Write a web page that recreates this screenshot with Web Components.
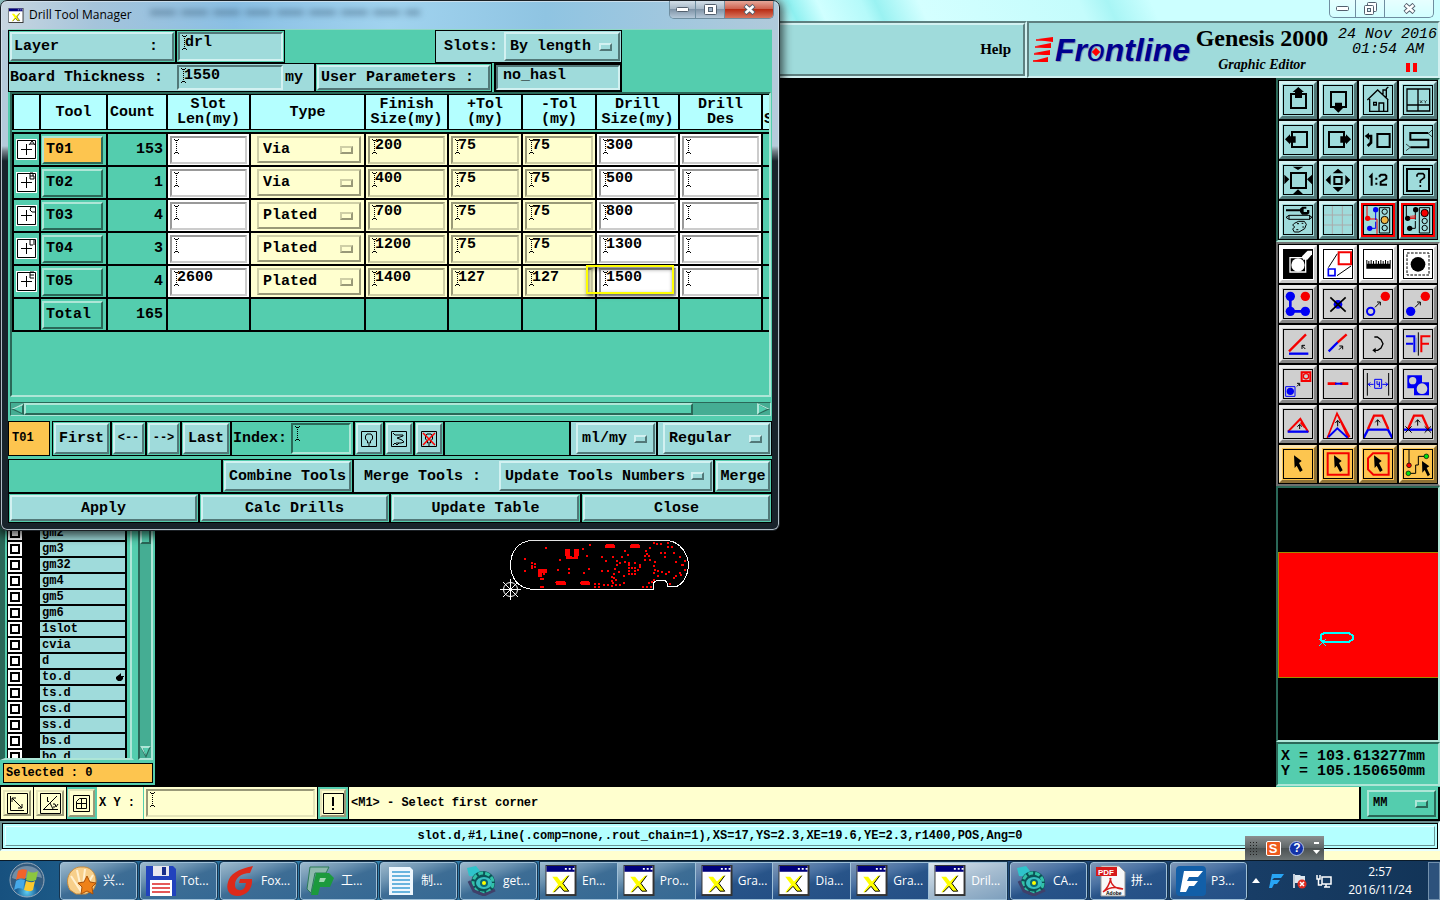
<!DOCTYPE html>
<html lang="en">
<head>
<meta charset="utf-8">
<title>Drill Tool Manager</title>
<style>
html,body{margin:0;height:100%}
body{background:#ffffcf;overflow:hidden;font:bold 15px/15px "Liberation Mono","Noto Sans CJK SC",monospace;color:#000}
genesis-desktop{min-height:100vh}
</style>
</head>
<body>
<genesis-desktop></genesis-desktop>
<script>
const BASE = `
*{box-sizing:border-box}
button,input,select{font:inherit;color:inherit;margin:0;border-radius:0;outline:0}
svg{display:block}
`;
const define = (name, css, html) => {
  customElements.define(name, class extends HTMLElement {
    connectedCallback() {
      if (this.shadowRoot) return;
      const root = this.attachShadow({ mode: 'open' });
      root.innerHTML = `<style>${BASE}${css}</style>` + (typeof html === 'function' ? html(this) : html);
    }
  });
};
const svg = (w, h, box, body) => `<svg width="${w}" height="${h}" viewBox="${box}" aria-hidden="true">${body}</svg>`;

/* ---------- basic controls ---------- */
define('motif-button', `
:host{display:block;min-width:0}
button{display:flex;align-items:center;justify-content:var(--align,center);width:100%;height:100%;padding:0 var(--pad,0px);white-space:pre;
 background:var(--face,#9fdbdb);border:2px solid;border-color:var(--lo,#d2f1f1) var(--hi,#527878) var(--hi,#527878) var(--lo,#d2f1f1)}
`, '<button type="button"><slot></slot></button>');

const IBEAM = `url("data:image/svg+xml,%3Csvg xmlns='http://www.w3.org/2000/svg' width='5' height='15' shape-rendering='crispEdges'%3E%3Cpath d='M2.500 1V15' stroke='%23000' stroke-dasharray='1 1'/%3E%3Cpath d='M0 0h1v1H0zM1 1h1v1H1zM3 1h1v1H3zM4 0h1v1H4zM0 14h1v1H0zM1 13h1v1H1zM3 13h1v1H3zM4 14h1v1H4z'/%3E%3C/svg%3E")`;
define('motif-field', `
:host{display:block;min-width:0}
input{display:block;width:100%;height:100%;padding:0 0 var(--drop,9px) var(--text,5px);border:2px solid;
 border-color:var(--hi,#527878) var(--lo,#d2f1f1) var(--lo,#d2f1f1) var(--hi,#527878);
 background:var(--face,#9fdbdb) ${IBEAM} 2px 1px no-repeat}
:host([plain]) input{background-image:none}
`, el => `<input type="text" aria-label="${el.getAttribute('label')}" value="${el.getAttribute('value') || ''}">`);

define('motif-option', `
:host{display:grid;min-width:0}
select{grid-area:1/1;appearance:none;width:100%;height:100%;padding:0 24px 0 4px;background:var(--face,#9fdbdb);border:2px solid;
 border-color:var(--lo,#d2f1f1) var(--hi,#527878) var(--hi,#527878) var(--lo,#d2f1f1)}
i{grid-area:1/1;place-self:center end;margin-right:8px;width:13px;height:8px;border:2px solid;pointer-events:none;
 border-color:var(--lo,#d2f1f1) var(--hi,#527878) var(--hi,#527878) var(--lo,#d2f1f1)}
`, el => `<select aria-label="${el.getAttribute('label')}"><option>${el.getAttribute('value')}</option></select><i></i>`);

/* ---------- header ---------- */
define('window-buttons', `
:host{display:flex;height:18px;border:1px solid #6f8ea0;border-top:0;border-radius:0 0 5px 5px;overflow:hidden}
button{border:0;border-right:1px solid #6f8ea0;padding:0;width:29px;display:grid;place-items:center;background:linear-gradient(#ffffff88,#ffffff22)}
button:nth-child(2){width:26px}
button:last-child{width:48px;border-right:0}
:host([active]) button{background:linear-gradient(#d3dfe8,#a3b5c4 50%,#8195a8 50%,#b5c8d8)}
:host([active]) button:last-child{background:linear-gradient(#e6a799,#cd5c48 50%,#b92d15 50%,#d8765f)}
`, el => `<button aria-label="Minimize">${svg(13,5,'0 0 13 5','<rect x=".5" y=".5" width="12" height="4" rx="1" fill="#fff" stroke="#53606e"/>')}</button>
<button aria-label="Restore">${el.hasAttribute('active')
  ? svg(13,11,'0 0 13 11','<rect x=".5" y=".5" width="12" height="10" rx="1" fill="#fff" stroke="#53606e"/><rect x="4.500" y="3.500" width="4" height="4" fill="#9eb4c8" stroke="#53606e"/>')
  : svg(13,13,'0 0 13 13','<rect x="3.500" y=".5" width="9" height="9" rx="1" fill="#fff" stroke="#53606e"/><rect x=".5" y="3.500" width="9" height="9" rx="1" fill="#fff" stroke="#53606e"/><rect x="3.500" y="6.500" width="3" height="3" fill="#d8f4f8" stroke="#53606e"/>')}</button>
<button aria-label="Close">${svg(13,11,'0 0 13 11','<path d="M2 1.500 11 9.500M11 1.500 2 9.500" stroke="#53606e" stroke-width="4.500"/><path d="M2.500 2 10.500 9M10.500 2 2.500 9" stroke="#fff" stroke-width="2.500"/>')}</button>`);

define('app-header', `
:host{display:block}
.title{height:21px;display:flex;justify-content:flex-end;padding-right:6px;background:linear-gradient(65deg,#b9fbfb 0 54%,#8ef0f0 55%,#d0ffff 57%,#b5fafa 60%,#9af2f2 61%,#d4ffff 64%,#c4fcfc 75%,#a8f5f5 77%,#ccffff 80%)}
.bar{display:flex;height:57px;background:#9fdbdb}
.menu,.brand{border:2px solid;border-color:#5e8080 #d2f1f1 #d2f1f1 #5e8080}
.menu{flex:1}
.menu nav{height:100%;display:flex;align-items:center;justify-content:flex-end;padding-right:12px;border:2px solid;border-color:#d2f1f1 #5e8080 #5e8080 #d2f1f1}
a{color:inherit;text-decoration:none;font:bold 15px/15px "Liberation Serif",serif}
.brand{width:413px;display:flex;padding-left:4px}
.logo{display:flex;align-items:center;color:#000090;font:italic bold 32px/40px "Liberation Sans",sans-serif;height:53px;gap:2px;width:160px}
.logo svg{flex:none}
.logo span{position:relative;white-space:pre;text-shadow:1px 1px #8e9ab0}
.logo span b{font-weight:400}
.logo i{position:absolute;left:38px;top:19px;width:6px;height:6px;background:red;transform:rotate(45deg)}
.names{width:138px;text-align:center;font-family:"Liberation Serif",serif;white-space:nowrap}
.names h1{margin:0;font:bold 24px/30px "Liberation Serif",serif}
.names p{margin:4px 0 0;font:italic bold 14px/16px "Liberation Serif",serif}
.time{flex:1;text-align:right;font:italic 15px/15px "Liberation Mono",monospace;padding-top:4px}
.time div{padding-right:1px}.time div+div{padding-right:14px}
.pause{display:flex;gap:3px;justify-content:flex-end;padding:6px 21px 0 0}
.pause b{width:4px;height:9px;background:red}
`, `<div class="title"><window-buttons></window-buttons></div>
<div class="bar"><div class="menu"><nav><a href="#help">Help</a></nav></div>
<div class="brand"><div class="logo">${svg(20,26,'0 0 20 26','<path d="M5 2 20 0V5L12 4ZM3 9 18 6V11L12 11ZM1 16 17 13V18L11 18ZM0 24 15 20V25L9 25Z" fill="red"/><path d="M3 3H16M2 10H14M1 17H13M0 24H12" stroke="red" stroke-width="1.500"/>')}<span>Fr<b>o</b>ntline<i></i></span></div>
<div class="names"><h1>Genesis 2000</h1><p>Graphic Editor</p></div>
<div class="time"><div>24 Nov 2016</div><div>01:54 AM</div><span class="pause"><b></b><b></b></span></div></div></div>`);

/* ---------- layer list ---------- */
define('layer-row', `
:host{display:flex;height:16px;padding:1px 0;background:#000;flex:none;font-size:12px;line-height:15px}
label{display:flex;flex:1;gap:18px}
input{appearance:none;flex:none;width:14px;height:14px;background:#fff;border:2px solid #fff;box-shadow:inset 0 0 0 2px #000}
span{flex:1;height:14px;padding-left:2px;background:#9fdbdb;margin-right:2px;display:flex;justify-content:space-between}
svg{margin:1px 1px 0 0}
`, el => `<label><input type="checkbox"><span>${el.textContent}${el.hasAttribute('mark') ? svg(8,12,'0 0 8 12','<path d="M0 6 4 3 5 2 5 5H8V6H7V8L5 10H2L0 8Z"/>') : ''}</span></label>`);

const LAYERS = ['gm2','gm3','gm32','gm4','gm5','gm6','1slot','cvia','d','to.d','ts.d','cs.d','ss.d','bs.d','bo.d'];
define('layer-panel', `
:host{display:flex;flex-direction:column;width:155px;background:#54cdae;padding-bottom:2px}
.body{flex:1;display:flex;min-height:0}
.frame{width:134px;border:2px solid #54cdae;border-left:5px solid #2a6858;border-bottom-color:#aee6d7;border-top:0;padding-left:2px;display:flex;flex-direction:column;justify-content:flex-end}
.list{height:233px;margin-right:3px;overflow:hidden;display:flex;flex-direction:column;padding-left:1px;background:#000;box-shadow:3px 0 #54cdae}
.inner{border-right:2px solid #aee6d7}
.scroll{width:15px;margin-left:4px;background:#45ad93;border:2px solid;border-color:#2a6858 #aee6d7 #aee6d7 #2a6858;display:flex;flex-direction:column;justify-content:space-between}
.thumb{height:464px;border:2px solid;background:#54cdae;border-color:#aee6d7 #2a6858 #2a6858 #aee6d7}
p{margin:3px 2px 0 3px;height:20px;border:1px solid #000;background:#fdc54f;font-size:12px;line-height:19px;padding-left:2px;white-space:pre}
`, `<div class="body"><div class="frame"><div class="inner"><div class="list">${LAYERS.map(n => `<layer-row ${n === 'to.d' ? 'mark' : ''}>${n}</layer-row>`).join('')}</div></div></div>
<div class="scroll"><div class="thumb"></div>${svg(11,12,'0 0 11 12','<path d="M0 0H11L6 12Z" fill="#2a6858"/><path d="M0 0H11L9 2H3L6 10Z" fill="#aee6d7"/><path d="M3 2H9L6 9Z" fill="#54cdae"/>')}</div></div><p>Selected : 0</p>`);

/* ---------- drawing canvas ---------- */
const PADS = [[165,51],[102,84],[102,120],[207,87],[201,117],[234,114],[234,126],[288,75],[276,55],[297,42],[279,126],[293,114],[333,78],[345,91],[333,120],[365,78],[350,121],[377,90],[386,96],[394,78],[402,94],[411,72],[413,96],[378,102],[371,114],[384,124],[399,135],[369,130],[362,137],[375,147],[368,141],[362,150],[366,156],[374,161],[363,165],[350,162],[339,162],[312,159],[324,159],[312,168],[324,168],[386,161],[398,156],[414,111],[423,111],[432,111],[414,120],[432,120],[414,129],[423,129],[432,129],[432,96],[447,102],[447,108],[440,118],[402,60],[462,75],[468,69],[474,75],[462,87],[477,87],[465,60],[477,51],[489,36],[498,39],[510,39],[531,36],[531,48],[543,48],[522,78],[522,66],[510,66],[549,66],[555,93],[567,78],[573,102],[582,90],[582,117],[567,126],[492,93],[489,105],[492,117],[501,120],[513,123],[525,129],[534,123],[501,135],[555,135],[570,132],[549,141],[537,159],[456,168],[468,168],[480,168],[474,156],[483,153],[489,126],[489,147],[123,96],[132,99],[123,105],[132,108],[123,111],[150,144],[156,144],[150,168],[156,168],[414,102],[575,101]];
define('board-canvas', `
:host{display:block;flex:1;position:relative;background:#000;overflow:hidden;min-width:0}
svg{position:absolute;left:335px;top:452px}
`, svg(210,75,'0 0 630 225',`<g shape-rendering="crispEdges"><path d="M120 32H535C572 36 595 75 595 104C595 140 575 166 557 170H532V160L526 151H500L491 158V178H125C85 174 62 145 62 104C62 65 85 36 120 32Z" fill="none" stroke="#fff" stroke-width="3"/>
<g fill="red">${PADS.map(([x,y]) => `<rect x="${x}" y="${y}" width="6" height="6"/>`).join('')}
<path d="M225 57H240V77H246V81H252V57H267V77H264V87H228V78H225ZM144 117H171V129H165V135H159V129H156V141H144ZM345 45 350 42H370L375 47V53H345ZM420 45 425 42H445L450 47V53H420ZM195 156 200 153H223L228 158V164H198ZM270 156 275 153H295L300 158V165H272Z"/></g></g>
<path d="M30 178.500H93M61.500 147V210M39 156 84 201M84 156 39 201" fill="none" stroke="#fff" stroke-width="3"/><circle cx="61.500" cy="178.500" r="21" fill="none" stroke="#fff" stroke-width="3"/>`));

/* ---------- tool palette: icons on a 90-unit grid, three units to a pixel ---------- */
const K = (d, w = 6, c = '#000') => `<path d="${d}" fill="none" stroke="${c}" stroke-width="${w}"/>`;
const F = (d, c = '#000') => `<path d="${d}" fill="${c}"/>`;
const C = (x, y, r, c, s = '', w = 3) => `<circle cx="${x}" cy="${y}" r="${r}" fill="${c}" ${s && `stroke="${s}" stroke-width="${w}"`}/>`;
const B = '#0000f5', R = '#f50000';
const POINTER = 'M33 19 56 36 48 42 59 64 51 69 41 50 35 57Z';
const ICONS = {
  'Pan up': K('M24 27H69V69H24Z') + F('M46 6 63 21H57V39H36V21H29Z'),
  'Pan down': K('M24 21H69V66H24Z') + F('M46 83 63 66H57V53H36V66H29Z'),
  'Home': K('M13 45 44 15 76 45M20 42V79H74V42M32 52H40V60H32ZM48 79V54H62V79M60 28V15H70V37M69 12 76 6',4),
  'Window layout': K('M12 12H80V78H12ZM45 12V78M12 60H80',4) + K('M51 46 58 54M58 46 51 54M63 46 67 50 71 46M67 50V55',2),
  'Pan left': K('M27 21H72V66H27Z') + F('M6 43 21 28V34H38V53H21V58Z'),
  'Pan right': K('M18 21H63V66H18Z') + F('M84 43 69 28V34H52V53H69V58Z'),
  'Previous view': K('M43 27H80V66H43Z') + K('M13 33H24V53L14 63',8) + F('M5 33 18 23V44Z'),
  'Snake view': K('M76 24H22V44H76V67H22') + K('M76 26 88 14M76 26 88 36M22 67 9 57M22 67 9 77',2),
  'Zoom out': K('M24 24H69V69H24Z') + F('M29 5H61L45 15ZM29 88H61L45 73ZM4 29 19 43 4 58ZM87 29 72 43 87 58Z'),
  'Zoom in': K('M34 36H56V57H34Z') + F('M29 25H61L45 11ZM29 66H61L45 81ZM23 30 8 45 23 60ZM67 30 82 45 67 60Z'),
  'Scale 1:2': K('M19 37 26 30V62M40 38V44M40 53V59M50 37V32L54 29H66L70 33V41L53 51V59H72',6),
  'Help query': K('M12 12H78V78H12Z',6) + K('M42 35V30L46 26H60L64 30V38L52 47V54M52 60V66',5),
  'Settings': F('M9 13H55V19H9ZM51 11 58 5H70V11H62V21H72V15H79V25L73 29H57L51 21Z') + K('M9 37 18 31H80V43H18ZM18 31V43M78 31 87 37 78 43',3) + K('M34 55 47 49H64L70 58 65 71 48 81H34L29 72 35 66 29 60ZM42 56H48M56 55H61M58 66H63M40 74H46',3),
  'Grid': K('M2 30H88M2 60H88M28 2V88M58 2V88',3,'#a9abab'),
  'Run step': K('M12 2V42L18 40M12 42H42V88',3,R) + C(14,40,8,R) + C(38,14,8,B) + C(20,70,8,B) + K('M38 14V45M38 50V70H20',3,B) + K('M49 8H80V84H49Z',3) + C(65,20,8,'none','#000') + C(65,45,11,'#efb542','#000') + C(65,69,8,'none','#000'),
  'Stop step': K('M10 2V42M37 14V44M37 48V70H20',3) + C(14,40,8,'#000') + C(38,14,8,'#000') + C(20,70,8,'#000') + K('M20 40H36M24 32V40M30 31V40M36 30V40',3,R) + K('M49 8H80V84H49Z',3) + C(65,24,11,R,'#000') + C(65,48,8,'none','#000') + C(65,69,8,'none','#000'),
  'Invert': F('M3 3H87V87H3Z') + K('M21 26H68V69H21Z',4,'#fff') + F('M57 22 69 10 74 5H87V16L73 32H60Z','#fff') + C(45,48,20,'#fff'),
  'Resize': K('M47 10H84V46H47Z',6,R) + K('M16 60H36V80H16Z',5,B) + K('M16 56 43 14M42 80 84 51',3),
  'Measure': F('M10 33H13V44H16V36H19V44H23V33H26V44H30V36H33V44H38V33H41V44H45V36H48V44H52V33H55V44H59V36H62V44H66V33H69V44H73V36H76V44H80V33H83V59H10Z'),
  'Select pad': `<path d="M12 12H78V78H12Z" fill="none" stroke="#000" stroke-width="3" stroke-dasharray="8 4"/>` + C(45,46,22,'#000'),
  'Connect nodes': K('M22 22V67H67',8,B) + C(22,22,14,B) + C(22,67,14,B) + C(67,67,14,B) + C(67,22,14,R),
  'Delete': C(45,46,13,B) + K('M22 25 68 68M68 25 22 68',5),
  'Copy ring': C(23,67,11,'none',B,6) + C(67,22,14,R) + K('M36 55 51 40M42 39H52V49',3),
  'Copy pad': C(23,67,14,B) + C(67,22,14,R) + K('M36 55 51 40M42 39H52V49',3),
  'Angle': K('M18 67 69 16',7,R) + K('M18 74H76',7,B) + K('M67 60 57 50M57 60V49H66',3),
  'Stretch line': K('M17 67 45 39',7,B) + K('M44 40 71 16',7,R) + K('M48 62 58 52M49 51H59V61',3),
  'Rotate': K('M34 24H43L54 32 60 44 54 57 44 64H34',4) + F('M28 64 38 56V72Z'),
  'Mirror': K('M9 22H37M9 44H30M34 22V70',6,B) + K('M39 26V69',3,'#6880f0') + K('M55 70V22H82M55 44H78',6,R) + K('M46 10V80',3),
  'Move': K('M8 53H36V82H8Z',3,B) + C(22,67,11,B) + K('M56 10H82V36H56Z',6,R) + C(69,22,8,'none',R,4) + K('M42 52 49 45M42 43H50V51',3),
  'Join': K('M14 44H40M52 44H76',8,R) + K('M36 44H58',6,B),
  'Spacing': K('M13 12V80M77 12V80',3) + K('M15 46H32M58 46H75M22 40 16 46 22 52M68 40 74 46 68 52M35 31H56V58H35ZM42 36V46H51M49 38V54',3,B),
  'Overlap': F('M13 19H57V40H78V79H33V58H13Z',B) + C(29,35,11,'#cfcfcf') + C(57,59,16,'#cfcfcf'),
  'Triangle': K('M15 68 52 30 76 70M66 56 53 40',6,R) + K('M14 68H76',7,B) + K('M50 60V47M43 53 50 46 57 53',3),
  'Chevron': K('M13 87 42 13 76 87M42 13 80 84',5,R) + K('M16 84 43 58 74 86',6,B) + K('M44 52V35M37 42 44 34 51 42',3),
  'Trapezoid': K('M2 87 15 62H75L88 87',7,B) + K('M15 60 33 20H58L76 60',7,R) + K('M44 50V33M37 40 44 32 51 40',3),
  'Trapezoid cut': K('M2 62H88',7,B) + K('M15 60 33 20H58L76 60',7,R) + K('M44 50V33M37 40 44 32 51 40',3) + K('M7 52 26 71M26 52 7 71M65 52 84 71M84 52 65 71',3),
  'Select': F(POINTER),
  'Select frame': K('M14 13H77V77H14Z',6,R) + F(POINTER),
  'Select polygon': K('M30 13H77V77H31L15 61V28Z',6,R) + F(POINTER),
  'Select net': K('M18 2V48M16 73H38V48H46V22H68',3) + C(18,49,7,R,'#000',2) + C(70,22,7,'#00e010','#000',2) + C(16,73,7,'#00e010','#000',2) + F('M57 36 79 52 71 57 81 77 74 82 65 63 58 71Z')
};
define('tool-button', `
:host{display:block}
button{width:38px;height:38px;padding:0;border:3px solid;background:var(--face,#9fdbdb);border-color:var(--lo,#d2f1f1) var(--hi,#527878) var(--hi,#527878) var(--lo,#d2f1f1);display:grid;place-items:center}
:host([alert]) button{background:#f00;border-width:2px}
:host([alert]) svg{background:#9fdbdb}
svg{border:1px solid #000;width:30px;height:30px}
`, el => { const n = el.getAttribute('name'); return `<button type="button" aria-label="${n}">${svg(30,30,'3 3 84 84',ICONS[n])}</button>`; });

const names = Object.keys(ICONS);
const tools = (a, b) => names.slice(a, b).map(n => `<tool-button name="${n}" ${/ step$/.test(n) ? 'alert' : ''}></tool-button>`).join('');
define('tool-palette', `
:host{display:flex;flex-direction:column;width:164px;background:#54cdae}
.set{display:grid;grid-template-columns:repeat(4,38px);gap:2px;padding:1px;background:#000;border:2px solid;border-color:#2a6858 #aee6d7 #aee6d7 #2a6858}
.edit{border-color:#6f6f6f #e6e6e6 #6f6f6f #6f6f6f;grid-template-rows:repeat(6,38px);--face:#cfcfcf;--lo:#ececec;--hi:#858585}
.edit tool-button:nth-child(-n+4){--face:#fff;--lo:#fff;--hi:#cacaca}
.edit tool-button:nth-child(n+21){--face:#fdc54f;--lo:#fbe5b2;--hi:#8d7137}
.map{flex:1;background:#000;border:2px solid;border-color:#2a6858 #aee6d7 #aee6d7 #2a6858;padding-top:64px}
.map div{height:126px;background:red;border:1px solid #a08c00;border-right:0}
.map svg{margin:78px 0 0 39px}
.xy{height:44px;margin-bottom:1px;border:2px solid;border-color:#2a6858 #aee6d7 #aee6d7 #2a6858;padding:5px 0 0 3px;white-space:pre;overflow:hidden}
`, `<div class="set">${tools(0,16)}</div><div class="set edit">${tools(16,40)}</div>
<div class="map"><div>${svg(38,16,'0 0 38 16','<path d="M6 2H31L35 5V8L31 11H6L3 9V4Z" fill="none" stroke="#0ff" stroke-width="2" shape-rendering="crispEdges"/><path d="M1 8 8 15M8 8 1 15" stroke="#0ff"/>')}</div></div>
<div class="xy"><div>X = 103.613277mm</div><div>Y = 105.150650mm</div></div>`);

/* ---------- command and status bars ---------- */
const FRAME = '<path d="M.500 .500H20.500V20.500H.500Z" fill="none" stroke="#000"/>';
define('command-bar', `
:host{display:flex;height:34px;background:#000;padding:0 2px 2px 1px;--face:#ffffcf;--lo:#e5e5ba;--hi:#999978;font-size:12px}
.cell{width:32px;margin-right:1px;background:#ffffcf;padding:3px 2px}
.cell.on{background:#54cdae;width:29px;margin-right:0;padding:2px 1px}
motif-button{height:100%}
label{display:flex;align-items:center;white-space:pre;background:#ffffcf;border-left:1px solid #54cdae;border-right:1px solid #54cdae;width:48px;padding-left:2px;font-size:12px}
.in{width:173px;background:#ffffcf;padding:2px}
.in motif-field{height:28px}
.bang{width:30px;background:#54cdae;padding:2px;margin-left:1px;margin-right:1px}
output{flex:1;display:flex;align-items:center;padding-left:2px;background:#ffffcf;margin-right:2px}
.unit{width:77px;background:#54cdae;padding:3px 2px 2px 6px;--face:#54cdae;--lo:#aee6d7;--hi:#2a6858;font-size:12px}
.unit motif-option{height:27px}
`, `<div class="cell"><motif-button>${svg(21,21,'0 0 21 21',FRAME+'<path d="M3.500 3V17.500H17M5 5 15 15M5 9V5H9M15 11V15H11" fill="none" stroke="#000"/>')}</motif-button></div>
<div class="cell"><motif-button>${svg(21,21,'0 0 21 21',FRAME+'<path d="M3 16.500H18M4 16 17 3M7.500 4V8.500H9M10 10 13 16M13 11H15L16 14 18 11M13 14H15" fill="none" stroke="#000"/>')}</motif-button></div>
<div class="cell on"><motif-button>${svg(17,17,'0 0 17 17','<path d="M.500 .500H16.500V16.500H.500ZM3.500 6.500 6.500 3.500H13.500V13.500H3.500ZM3 8.500H14M8.500 3V14" fill="none" stroke="#000"/>')}</motif-button></div>
<label>X Y :</label><div class="in"><motif-field label="X Y"></motif-field></div>
<div class="bang"><motif-button>${svg(21,21,'0 0 21 21',FRAME+'<path d="M10 4V13M10 15V17" stroke="#000" stroke-width="2"/>')}</motif-button></div>
<output>&lt;M1&gt; - Select first corner</output>
<div class="unit"><motif-option label="Units" value="MM"></motif-option></div>`);

define('status-bar', `
:host{display:block;height:30px;border:2px solid;border-color:#6a8f8f #e8ffff #e8ffff #6a8f8f;background:#b4ffff;font-size:12px}
div{height:26px;border:1px solid #000;padding:2px}
p{margin:0;height:20px;display:grid;place-items:center;border:1px solid;border-color:#e8ffff #6a9494 #6a9494 #e8ffff;white-space:nowrap;overflow:hidden}
`, `<div><p>slot.d,#1,Line(.comp=none,.rout_chain=1),XS=17,YS=2.3,XE=19.6,YE=2.3,r1400,POS,Ang=0</p></div>`);

/* ---------- drill table ---------- */
const ROWS = [
  ['A','T01',153,'','Via',200,75,75,300],
  ['B','T02',1,'','Via',400,75,75,500],
  ['C','T03',4,'','Plated',700,75,75,800],
  ['D','T04',3,'','Plated',1200,75,75,1300],
  ['E','T05',4,2600,'Plated',1400,127,127,1500]
];
const GLYPH = { A:'M13 6 16 2 19 6M14 5H18', B:'M14 1V7M14 1H17V4H14M17 4H18V7H14', C:'M19 2H15L14 5 16 7H19', D:'M14 1V7M18 1V7M14 7H17', E:'M14 1V7M14 1H18M14 4H18M14 7H18' };
define('drill-table', `
:host{display:block;overflow:hidden}
table{table-layout:fixed;width:758px;border-collapse:separate;border-spacing:0}
th{height:36px;padding:0;font-weight:bold;background:#b4ffff;border:1px solid #000;border-width:1px 2px 1px 0;white-space:pre-line}
th:first-child{border-left-width:2px}
th:last-child{text-align:left;white-space:pre;overflow:hidden;border-right:0;padding-left:1px}
td{height:33px;padding:0;border:0 solid #000;border-width:2px 2px 0 0}
td:first-child{border-left-width:2px}
tr.gap td{height:2px;border:0}
tfoot td{height:35px;border-bottom-width:2px}
td:last-child{border-right:0}
.y{background:#ffffcf;--face:#ffffcf;--lo:#cfcfa6;--hi:#999978}
.w{background:#fff;--face:#fff;--lo:#ccc;--hi:#999}
.n{text-align:right;padding-right:3px}
motif-field{height:28px;margin:0 2px}
motif-option{height:27px;margin:0 3px 0 6px}
.t{--face:#54cdae;--lo:#aee6d7;--hi:#2a6858;--align:flex-start;--pad:2px}
.t motif-button{height:28px;margin:0 3px 0 1px}
tr.sel .t{--face:#fdc54f}
svg{margin:0 auto}
`, `<table><colgroup>${[29,67,60,83,115,83,74,74,83,83,7].map(w => `<col style="width:${w}px">`).join('')}</colgroup>
<thead><tr>${['','Tool','Count\u00a0','Slot\nLen(my)','Type','Finish\nSize(my)','+Tol\n(my)','-Tol\n(my)','Drill\nSize(my)','Drill\nDes','\u00a0\nS'].map(t => `<th scope="col">${t}</th>`).join('')}</tr></thead>
<tbody><tr class="gap"><td colspan="11"></td></tr>${ROWS.map((r, i) => `<tr class="${i ? '' : 'sel'}">
<td>${svg(21,21,'0 0 21 21','<path d="M0 0H21V21H0Z" fill="#fff"/><path d="M1.500 1.500H19.500V19.500H1.500ZM10.500 5V16M5 10.500H16" fill="none" stroke="#000"/><path d="'+GLYPH[r[0]]+'" fill="none" stroke="#000"/>')}</td>
<td class="t"><motif-button>${r[1]}</motif-button></td><td class="n">${r[2]}</td>
<td class="w"><motif-field label="Slot length ${r[1]}" value="${r[3]}"></motif-field></td>
<td class="y"><motif-option label="Type ${r[1]}" value="${r[4]}"></motif-option></td>
${[5,6,7].map(k => `<td class="y"><motif-field label="${['Finish size','Plus tolerance','Minus tolerance'][k-5]} ${r[1]}" value="${r[k]}"></motif-field></td>`).join('')}
<td class="w"><motif-field label="Drill size ${r[1]}" value="${r[8]}"></motif-field></td>
<td class="w"><motif-field label="Drill designation ${r[1]}"></motif-field></td><td></td></tr>`).join('')}</tbody>
<tfoot><tr><td></td><td class="t"><motif-button>Total</motif-button></td><td class="n">165</td>${'<td></td>'.repeat(8)}</tr></tfoot></table>`);

/* ---------- dialog ---------- */
const XICON = (w, h) => svg(w,h,'0 0 32 32','<path d="M0 0H32V32H0Z" fill="#333"/><path d="M1 1H30V30H1Z" fill="#fff"/><path d="M1 1H30V7H1Z" fill="#00007c"/><path d="M20 3H22V5H20ZM24 3H26V5H24ZM28 3H30V5H28Z" fill="#fff"/><path d="M7 12H12L16 17 22 11H24L18 19 24 27H19L15 22 9 28H7L13 20Z" fill="#ff0"/><path d="M24 11 18 19 24 27H19L15 22 9 28" fill="none" stroke="#000"/>');
const SQ = '<path d="M.500 .500H15.500V15.500H.500Z" fill="none" stroke="#000"/>';
const BULB = '<path d="M6.500 12V10L4.500 8V5L6 3H10L11.500 5V8L9.500 10V12ZM7 14H9" fill="none" stroke="#000"/>';
define('drill-dialog', `
:host{display:block;width:780px;padding:0 8px 7px;border:1px solid #1b2025;border-radius:7px;
 background:linear-gradient(90deg,#c8d6e0 0,#a5c4db 12%,#8abfe4 30%,#a1d3ef 50%,#8fc4e2 70%,#b0cadb 100%) 0 0/100% 29px no-repeat,linear-gradient(#b5cbdb 0 145px,#77838c 150px,#18232b 160px);
 box-shadow:inset 0 0 0 1px #d6e4eecc,0 2px 10px 3px #000a}
.title{height:28px;margin:0 -4px;display:flex;align-items:flex-start;font:12px/14px "Open Sans","Noto Sans",sans-serif;position:relative}
.title svg{margin:7px 5px 0 3px}
.title h2{margin:5px 0 0;font:12px/17px "Open Sans","Noto Sans",sans-serif;flex:1}
.haze{position:absolute;left:145px;top:9px;width:270px;height:5px;filter:blur(3px);background:repeating-linear-gradient(90deg,#3d5d7888 0 25px,#3d5d7822 25px 32px)}
window-buttons{margin-right:1px}
.client{background:#54cdae;margin:0 -1px;border-top:1px solid #8fd8c4;position:relative}
.row{display:flex}
.row>*{flex:none;border:1px solid #000}
.row>.fill{flex:1}
.row>.none{border:0}
.cell{padding:1px;--pad:2px}
.cell>*{height:100%}
.pane{background:#9fdbdb;display:flex;align-items:center;white-space:pre}
.left{--align:flex-start}
.frame{margin:0 1px 0 2px;height:305px;border:2px solid;border-color:#2a6858 #aee6d7 #aee6d7 #2a6858}
.bar{margin:5px 1px 5px 2px;height:14px;display:flex;align-items:center;background:#45ad93;border:1px solid;border-color:#2a6858 #aee6d7 #aee6d7 #2a6858}
.thumb{flex:0 1 669px;height:12px;background:#54cdae;border:2px solid;border-color:#aee6d7 #2a6858 #2a6858 #aee6d7}
.bar svg:last-child{margin-left:auto}
.nav{height:35px;margin-bottom:3px}
.nav .now{width:42px;margin-right:2px;background:#fdc54f;font-size:12px;display:flex;align-items:center;padding-left:3px}
.arrow{--pad:0px;font-size:12px}
.g{--face:#54cdae;--lo:#aee6d7;--hi:#2a6858}
.low{--drop:5px}
.mark{position:absolute;left:578px;top:235px;width:88px;height:29px;border:2px solid #ff0;box-shadow:1px 2px 4px #0008,inset 1px 2px 4px #0008}
`, `<div class="title">${XICON(16,15)}<h2>Drill Tool Manager</h2><span class="haze"></span><window-buttons active></window-buttons></div>
<div class="client">
<div class="row" style="height:33px"><div class="cell left" style="width:168px"><motif-button>Layer          :</motif-button></div><div class="cell" style="width:109px"><motif-field label="Layer" value="drl"></motif-field></div><div class="none" style="width:150px"></div>
<div class="pane cell" style="width:187px;padding-left:8px"><span style="height:auto;width:60px">Slots:</span><motif-option style="flex:1" label="Slots" value="By length"></motif-option></div></div>
<div class="row low" style="height:29px"><div class="pane cell" style="width:307px"><span style="height:auto;width:167px">Board Thickness :</span><motif-field style="width:106px" label="Board Thickness" value="1550"></motif-field><span style="height:auto;padding-left:2px">my</span></div>
<div class="cell left" style="width:177px"><motif-button>User Parameters :</motif-button></div><div class="none" style="width:2px"></div><div style="width:128px;border-width:2px"><motif-field plain style="height:25px" label="User Parameters" value="no_hasl"></motif-field></div></div>
<div class="frame"><drill-table></drill-table></div>
<div class="bar">${svg(13,12,'0 0 13 12','<path d="M0 6 13 0V12Z" fill="#2a6858"/><path d="M0 6 13 0 11 3 4 6Z" fill="#aee6d7"/><path d="M3 6 11 3V10Z" fill="#54cdae"/>')}<div class="thumb"></div>${svg(13,12,'0 0 13 12','<path d="M13 6 0 0V12Z" fill="#2a6858"/><path d="M0 12V0L13 6H10L2 2V10Z" fill="#aee6d7"/><path d="M10 6 2 2V10Z" fill="#54cdae"/>')}</div>
<div class="row nav"><div class="now">T01</div><div class="cell" style="width:59px"><motif-button>First</motif-button></div><div class="cell arrow" style="width:35px"><motif-button>&lt;--</motif-button></div><div class="cell arrow" style="width:35px"><motif-button>--&gt;</motif-button></div><div class="cell" style="width:50px"><motif-button>Last</motif-button></div>
<div class="cell g" style="width:123px;display:flex;align-items:center"><span style="height:auto;width:58px">Index:</span><motif-field style="width:60px" label="Index"></motif-field></div>
<div class="cell" style="width:30px"><motif-button>${svg(16,16,'0 0 16 16',SQ+BULB)}</motif-button></div><div class="cell" style="width:30px"><motif-button>${svg(16,16,'0 0 16 16',SQ+'<path d="M2 2 4 4H12V5L6 7 11 9 13 11 10 12H5M2 14 4 12 6 14 8 12" fill="none" stroke="#000"/>')}</motif-button></div><div class="cell" style="width:30px"><motif-button>${svg(16,16,'0 0 16 16',SQ+BULB+'<path d="M2 2 14 14M14 2 2 14" stroke="red" stroke-width="1.500"/>')}</motif-button></div>
<div class="fill"></div><div class="pane cell" style="width:87px;padding-left:5px"><motif-option style="flex:1" label="Units" value="ml/my"></motif-option></div><div class="pane cell" style="width:115px;padding-left:5px"><motif-option style="flex:1" label="Mode" value="Regular"></motif-option></div></div>
<div class="row" style="height:34px"><div class="fill"></div><div class="cell" style="width:131px"><motif-button>Combine Tools</motif-button></div><div class="pane cell" style="width:361px;padding-left:10px"><span style="height:auto;width:135px">Merge Tools :</span><motif-option style="flex:1" label="Merge Tools" value="Update Tools Numbers"></motif-option></div><div class="cell" style="width:58px;--pad:0px"><motif-button>Merge</motif-button></div></div>
<div class="row" style="height:30px">${['Apply','Calc Drills','Update Table','Close'].map(t => `<div class="cell fill"><motif-button>${t}</motif-button></div>`).join('')}</div>
<div class="mark"></div></div>`);

/* ---------- task bar ---------- */
const SHELL = svg(32,30,'0 0 32 30','<path d="M4 24C-3 12 6 0 16 1 28 0 34 14 27 24L20 28H10Z" fill="#f7cf8a" stroke="#c98b3a"/><path d="M16 27 5 10M16 27 11 4M16 27 19 3M16 27 27 9" stroke="#fff0cf" stroke-width="2"/><path d="M21 10 24 16 30 17 26 21 27 28 21 25 15 28 16 21 12 17 18 16Z" fill="#ee8118" stroke="#a95008"/>');
const DISK = svg(30,30,'0 0 30 30','<path d="M0 0H27L30 3V30H0Z" fill="#2142bd"/><path d="M7 0H23V10H7Z" fill="#e8e8ee"/><path d="M16 1H20V9H16Z" fill="#1a2f8a"/><path d="M4 14H26V30H4Z" fill="#fff"/><path d="M6 18H24M6 22H24M6 26H24" stroke="#d22" stroke-width="1.500"/>');
const FOX = svg(30,30,'0 0 30 30','<path d="M27 0 24 7C15 7 9 12 9 19 9 25 16 26 19 21L20 17H13L14 13H26C27 22 21 30 11 30 2 29 0 23 2 16 4 8 12 3 27 0Z" fill="#dd2a1a"/>');
const PLOT = svg(30,30,'0 0 30 30','<path d="M4 1H23L20 7H9L5 27 1 23Z" fill="#8cb9ac" stroke="#2d7c58"/><path d="M10 7H23L28 12 24 21H14L12 29H5Z" fill="#1c9a3d"/><path d="M14 12H20L18 16H13Z" fill="#9fd8b0"/>');
const NOTE = svg(30,30,'-2 0 30 30','<path d="M1 1H22L25 4V29H1Z" fill="#eef7fd"/><path d="M4 6H22M4 10H22M4 14H22M4 18H22M4 22H22M4 26H22" stroke="#3d9fd3" stroke-width="1.500"/>');
const EYE = svg(32,30,'0 0 32 30','<path d="M1 2 10 0 14 5 14 11 3 10Z" fill="#2fc4cb"/><circle cx="17" cy="17" r="12" fill="#0c5257"/><circle cx="17" cy="17" r="10" fill="none" stroke="#31c1a6" stroke-width="3" stroke-dasharray="5 2"/><ellipse cx="18" cy="17" rx="8" ry="6" fill="#38bfc0"/><circle cx="18" cy="17" r="4" fill="#0b6a76"/><circle cx="18" cy="17" r="2" fill="#ff0"/><path d="M3 15 8 25 18 29 29 24" fill="none" stroke="#40406a" stroke-width="3"/>');
const PDF = svg(30,32,'0 0 30 32','<path d="M5 1H23L29 7V31H5Z" fill="#f8f8f8" stroke="#999"/><path d="M0 2H21V11H0Z" fill="#d61a1a"/><text x="2" y="9.500" font-family="Liberation Sans" font-weight="bold" font-size="8" fill="#fff">PDF</text><path d="M15 13C13 21 11 24 7 27M14 13C15 20 19 24 27 24 19 21 13 22 7 27" fill="none" stroke="#d61a1a" stroke-width="1.500"/><text x="10" y="30" font-family="Liberation Sans" font-size="5" font-weight="bold">Adobe</text>');
const FLY = svg(30,30,'0 0 30 30','<rect width="30" height="30" rx="4" fill="#125fa8"/><path d="M8 5H27L22 11H13L11 15H22L18 20H13L10 26H4Z" fill="#fff"/>');
define('task-button', `
:host{display:block}
button{width:100%;height:38px;display:flex;align-items:center;gap:5px;padding:0 5px;overflow:hidden;white-space:nowrap;color:#fff;border:1px solid #9fc0d8;outline:1px solid #16344f;outline-offset:0;border-radius:3px;
 background:linear-gradient(160deg,#9db9cc 0,#6c93b1 30%,#3d6d95 52%,#356994)}
:host([deep]) button{background:linear-gradient(160deg,#8099b8 0,#4c73a3 35%,#285489 55%,#244f85)}
:host([grouped]) button{border-width:1px 1px 1px 0;border-radius:0;outline:0}
:host([on]) button{background:linear-gradient(160deg,#dce6ee,#a5bcd0 50%,#7d9fbd)}
`, '<button type="button"><slot></slot></button>');
const task = (icon, text, attr = '') => `<task-button ${attr}>${icon}<span>${text}</span></task-button>`;
define('task-bar', `
:host{display:flex;align-items:center;height:40px;padding-left:60px;position:relative;color:#fff;border-top:1px solid #0a1a28;
 font:12px/16px "Open Sans","Noto Sans CJK SC",sans-serif;background:linear-gradient(90deg,#17517f,#3381ab 25%,#2a6798 45%,#20497a 70%,#123457)}
.orb{position:absolute;left:9px;top:1px;width:36px;height:36px;padding:0;border:0;background:none}
.one{width:77px;margin-right:3px;flex:none}
.group{display:flex;width:467px;margin-right:3px;outline:1px solid #16344f;flex:none}
.group>*{flex:1;min-width:0}
svg{flex:none}
.tray{display:flex;align-items:center;gap:8px;margin-left:auto;white-space:nowrap}
time{text-align:center;line-height:18px;width:80px;font-size:12px}
.show{width:12px;height:38px;border:1px solid #7391ad;background:#2d527c}
`, `<button class="orb" aria-label="Start">${svg(36,36,'0 0 36 36','<defs><radialGradient id="o" cy="85%"><stop offset="0" stop-color="#5fd0f5"/><stop offset=".6" stop-color="#1b6096"/><stop offset="1" stop-color="#345c7f"/></radialGradient></defs><circle cx="18" cy="18" r="17" fill="url(#o)" stroke="#9ab"/><path d="M3 16C5 0 31 0 33 16 22 12 12 20 3 16Z" fill="#fff" opacity=".3"/><path d="M9 9C12 7 15 7 18 8L16 17C13 16 10 16 7 18Z" fill="#f1622a"/><path d="M19 9C22 11 25 11 29 9L27 18C23 20 20 19 17 18Z" fill="#8cc63f"/><path d="M7 19C10 17 13 17 16 18L14 27C11 26 8 26 5 28Z" fill="#46a9e8"/><path d="M17 19C20 20 23 21 26 19L24 28C21 30 18 29 15 28Z" fill="#fcc92e"/>')}</button>
${[[SHELL,'兴...'],[DISK,'Tot...'],[FOX,'Fox...'],[PLOT,'工...'],[NOTE,'制...'],[EYE,'get...']].map(([i,t]) => task(i,t,'class="one"')).join('')}
<div class="group">${['En...','Pro...','Gra...','Dia...','Gra...','Dril...'].map((t,i) => task(XICON(32,31),t,'grouped ' + (i === 5 ? 'on' : i > 1 ? 'deep' : ''))).join('')}</div>
${[[EYE,'CA...'],[PDF,'拼...'],[FLY,'P3...']].map(([i,t]) => task(i,t,'class="one" deep')).join('')}
<div class="tray">${svg(8,5,'0 0 8 5','<path d="M0 5 4 0 8 5Z" fill="#fff"/>')}${svg(16,16,'0 0 16 16','<path d="M4 1H16L13 5H6L4 7H12L9 11H6L4 15H1Z" fill="#28a5f5"/>')}${svg(16,16,'0 0 16 16','<path d="M2 1V15" stroke="#fff" stroke-width="1.500"/><path d="M3 2H8L9 3H13V10H3Z" fill="#dde7ef"/><circle cx="10" cy="11" r="4.500" fill="#e02b20"/><path d="M8 9 12 13M12 9 8 13" stroke="#fff" stroke-width="1.500"/>')}${svg(16,16,'0 0 16 16','<path d="M6 4H15V11H6ZM8 14H14M10 11V14M1 2V6H4V2M2.500 6V12H6" fill="none" stroke="#fff" stroke-width="1.500"/>')}<time>2:57<br>2016/11/24</time><span class="show"></span></div>`);

define('ime-bar', `
:host{display:flex;align-items:center;justify-content:space-between;width:79px;height:24px;padding:0 4px;background:linear-gradient(#8b8f90,#5e6566 50%,#4b5152 50%,#6d7475)}
.grip{width:8px;height:15px;background:radial-gradient(#222 1px,transparent 1px) 0 0/3px 3px}
.s{width:15px;height:15px;border-radius:2px;background:#ee5a1c;border:1px solid #fff;font:bold 13px/13px "Liberation Sans",sans-serif;color:#fff;text-align:center}
.q{width:15px;height:15px;border-radius:50%;background:#1231a8;border:1px solid #b9c7e8;font:bold 12px/13px "Liberation Sans",sans-serif;color:#fff;text-align:center}
`, `<span class="grip"></span><span class="s">S</span><span class="q">?</span>${svg(7,12,'0 0 7 12','<path d="M1 0H6V2H1ZM0 8H7L3.500 12Z" fill="#fff"/>')}`);

define('genesis-desktop', `
:host{display:flex;flex-direction:column;position:relative;background:#ffffcf}
.main{flex:1;display:flex;background:#000;min-height:0}
command-bar{flex:none}status-bar{flex:none}task-bar{flex:none;margin-top:9px}
.main>*{flex:none}.main>board-canvas{flex:1}
layer-panel{margin-bottom:2px}
drill-dialog{position:absolute;left:0;top:0}
ime-bar{position:absolute;right:116px;bottom:40px}
`, `<app-header></app-header><div class="main"><layer-panel></layer-panel><board-canvas></board-canvas><tool-palette></tool-palette></div>
<command-bar></command-bar><status-bar></status-bar><task-bar></task-bar><drill-dialog></drill-dialog><ime-bar></ime-bar>`);
</script>
</body>
</html>
